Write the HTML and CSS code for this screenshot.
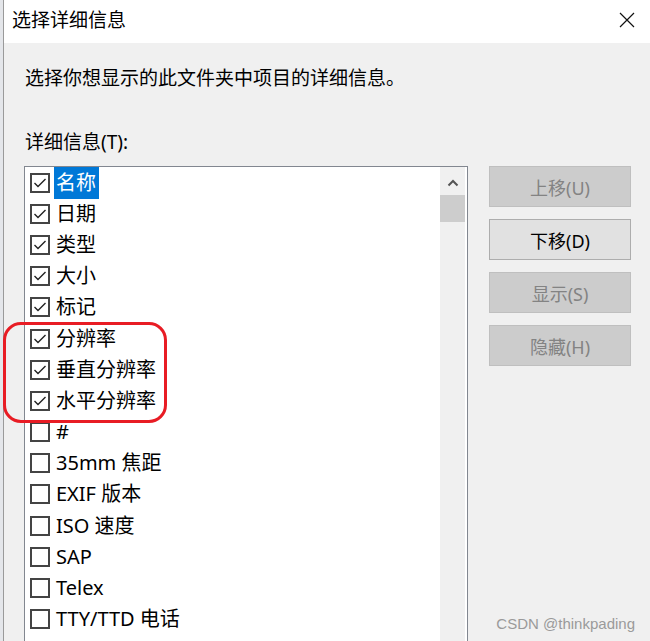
FILE: index.html
```html
<!DOCTYPE html>
<html lang="zh-CN">
<head>
    <meta charset="UTF-8">
    <title>选择详细信息</title>
    <link rel="stylesheet" href="styles.css">
</head>
<body>
    <div class="screen">
        <div class="edge"></div>

        <div class="dialog">
            <div class="titlebar">
                <span class="title">选择详细信息</span>
                <svg class="close" width="16" height="16" viewBox="0 0 16 16">
                    <path d="M1 1 L15 15 M15 1 L1 15" stroke="#111" stroke-width="1.2" fill="none"/>
                </svg>
            </div>

            <div class="content">
                <p class="desc">选择你想显示的此文件夹中项目的详细信息。</p>
                <p class="label">详细信息(T):</p>

                <div class="main">
                    <div class="listbox">
                        <ul class="items" id="items"></ul>
                        <div class="scrollbar">
                            <svg class="arrow" width="12" height="8" viewBox="0 0 12 8">
                                <path d="M1.5 6.5 L6 2 L10.5 6.5" stroke="#555" stroke-width="2" fill="none"/>
                            </svg>
                            <div class="thumb"></div>
                        </div>
                    </div>

                    <div class="buttons">
                        <button class="btn" disabled>上移(U)</button>
                        <button class="btn">下移(D)</button>
                        <button class="btn" disabled>显示(S)</button>
                        <button class="btn" disabled>隐藏(H)</button>
                    </div>
                </div>
            </div>
        </div>

        <!-- red marker drawn over the screenshot -->
        <div class="marker"></div>
        <div class="watermark">CSDN @thinkpading</div>
    </div>

    <script>
        const details = [
            { name: '名称', checked: true, selected: true },
            { name: '日期', checked: true },
            { name: '类型', checked: true },
            { name: '大小', checked: true },
            { name: '标记', checked: true },
            { name: '分辨率', checked: true },
            { name: '垂直分辨率', checked: true },
            { name: '水平分辨率', checked: true },
            { name: '#' },
            { name: '35mm 焦距' },
            { name: 'EXIF 版本' },
            { name: 'ISO 速度' },
            { name: 'SAP' },
            { name: 'Telex' },
            { name: 'TTY/TTD 电话' }
        ];

        const tick = '<svg width="16" height="16" viewBox="0 0 16 16"><path d="M2.5 8 L6 11.5 L13.5 4" stroke="#222" stroke-width="1.4" fill="none"/></svg>';

        document.getElementById('items').innerHTML = details.map(d => `
            <li class="row">
                <span class="box">${d.checked ? tick : ''}</span>
                <span class="name${d.selected ? ' selected' : ''}">${d.name}</span>
            </li>
        `).join('');
    </script>
</body>
</html>
```

FILE: styles.css
```css
* {
    box-sizing: border-box;
}

body {
    margin: 0;
    font-family: "Segoe UI", "Noto Sans", "Noto Sans CJK SC", sans-serif;
    color: #000;
    background: #f0f0f0;
}

.screen {
    position: relative;
    display: flex;
    width: 650px;
    height: 641px;
    overflow: hidden;
}

.edge {
    width: 3px;
    background: #e4e6ea;
}

.dialog {
    flex: 1;
    display: flex;
    flex-direction: column;
    border-left: 1px solid #9a9a9a;
    background: #f0f0f0;
}

.titlebar {
    flex: none;
    height: 43px;
    background: #fff;
    display: flex;
    align-items: center;
    justify-content: space-between;
    padding: 0 15px 3px 8px;
}

.title {
    font-size: 19px;
    line-height: 24px;
}

.close {
    display: block;
}

.content {
    flex: none;
    padding: 22px 0 0 20px;
}

.desc,
.label {
    margin: 0;
    padding-left: 1px;
    font-size: 19px;
    line-height: 26px;
}

.label {
    margin-top: 38px;
}

.main {
    display: flex;
    margin-top: 11px;
}

.listbox {
    flex: none;
    width: 444px;
    height: 500px;
    display: flex;
    border: 1px solid #828790;
    background: #fff;
}

.items {
    flex: 1;
    list-style: none;
    margin: 0;
    padding: 0;
}

.row {
    height: 31.2px;
    display: flex;
    align-items: center;
    padding-left: 5px;
}

.box {
    width: 20px;
    height: 20px;
    border: 2px solid #444;
    background: #fff;
    display: flex;
    align-items: center;
    justify-content: center;
}

.box svg {
    display: block;
}

.name {
    margin-left: 4px;
    padding: 0 3px 0 2px;
    font-size: 20px;
    line-height: 32px;
    white-space: nowrap;
}

.name.selected {
    background: #0078d7;
    color: #fff;
}

.scrollbar {
    width: 25px;
    margin-right: 2px;
    background: #f0f0f0;
}

.arrow {
    display: block;
    margin: 12px auto 0;
}

.thumb {
    height: 27px;
    margin-top: 8px;
    background: #cdcdcd;
}

.buttons {
    margin-left: 21px;
    display: flex;
    flex-direction: column;
    gap: 12px;
}

.btn {
    width: 142px;
    height: 41px;
    font-family: inherit;
    font-size: 18px;
    color: #000;
    background: #e1e1e1;
    border: 1px solid #adadad;
    padding: 0;
}

.btn:disabled {
    color: #838383;
    background: #cccccc;
    border-color: #bfbfbf;
}

.marker {
    position: absolute;
    left: 3px;
    top: 322px;
    width: 164px;
    height: 101px;
    border: 3px solid #e81c24;
    border-radius: 18px;
}

.watermark {
    position: absolute;
    right: 15px;
    bottom: 9px;
    font-family: "Liberation Sans", sans-serif;
    font-size: 15px;
    color: #9a9a9a;
}
```
